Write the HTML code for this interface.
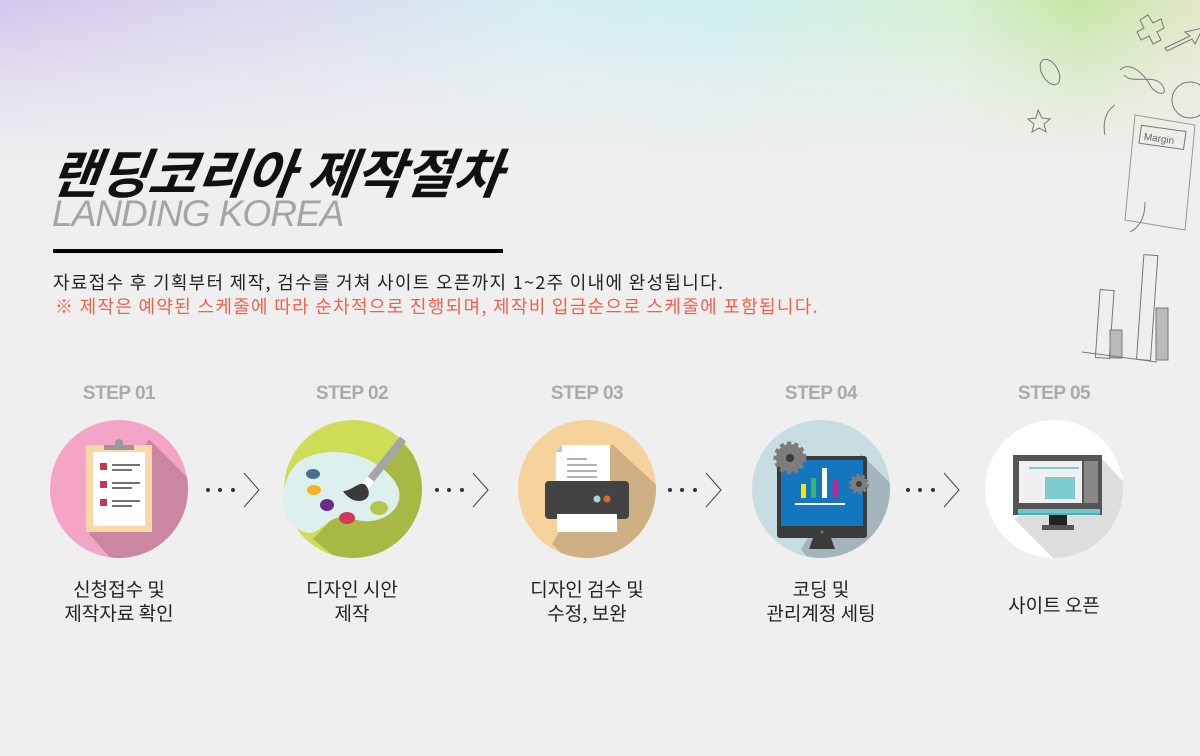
<!DOCTYPE html>
<html><head><meta charset="utf-8"><style>
*{margin:0;padding:0;box-sizing:border-box}
body{width:1200px;height:756px;overflow:hidden;background:#efefef;font-family:"Liberation Sans","Noto Sans CJK KR",sans-serif;position:relative}
.top{position:absolute;left:0;top:0;width:1200px;height:160px;background:linear-gradient(90deg,#d4c6ee 0%,#dcd8f0 20%,#d6eef2 45%,#cdeff0 60%,#d6f0d2 80%,#c6e6a4 90%,#e2e8c8 100%)}
.top:after{content:"";position:absolute;inset:0;background:linear-gradient(180deg,rgba(239,239,239,0) 0%,rgba(239,239,239,.6) 50%,#efefef 100%)}
h1{position:absolute;left:52px;top:136px;font-size:53px;font-weight:bold;font-style:italic;color:#111;font-family:"Noto Sans CJK KR",sans-serif;line-height:70px;transform:skewX(-8deg)}
.en{position:absolute;left:52px;top:194px;font-size:37px;font-style:italic;color:#a5a5a5;letter-spacing:-1px;line-height:40px}
.bar{position:absolute;left:53px;top:249px;width:450px;height:4px;background:#000}
.d1{position:absolute;left:53px;top:269px;font-size:18px;letter-spacing:1.3px;color:#222;font-family:"Noto Sans CJK KR",sans-serif}
.d2{position:absolute;left:55px;top:293px;font-size:18px;letter-spacing:1.3px;color:#f0614a;font-family:"Noto Sans CJK KR",sans-serif}
.step{position:absolute;top:383px;width:200px;margin-left:-100px;text-align:center;font-size:19px;font-weight:bold;color:#aaa;letter-spacing:-.5px}
.cap{position:absolute;width:200px;margin-left:-100px;text-align:center;font-size:19px;color:#222;line-height:24px;font-family:"Noto Sans CJK KR",sans-serif}
svg.c{position:absolute;top:419px}
.arr{position:absolute;top:470px}
</style></head><body>
<div class="top"></div>
<svg style="position:absolute;left:1020px;top:0" width="180" height="380" fill="none" stroke="#777" stroke-width="1">
<path d="M120 20l8-5 5 8 8-4 3 9-7 4 4 8-8 4-4-8-8 4-4-8 7-4z"/>
<path d="M145 48l25-12-5-4 18-4-8 16-3-5-25 12z"/>
<ellipse cx="30" cy="72" rx="8" ry="14" transform="rotate(-30 30 72)"/>
<path d="M18 110l4 8 8 1-6 5 2 8-7-4-7 4 2-8-6-5 8-1z"/>
<path d="M100 70c10-10 25 5 30 15s20 12 12 0-30 0-38-10"/>
<circle cx="170" cy="100" r="18"/>
<path d="M95 105c-15 10-10 30-10 30"/>
<path d="M115 115l60 10-10 105-60-10z" stroke="#999"/>
<rect x="120" y="128" width="45" height="18" transform="rotate(8 140 137)"/>
<text x="124" y="142" font-size="10" fill="#666" stroke="none" transform="rotate(8 140 137)">Margin</text>
<path d="M110 232c10-5 15-15 15-30" />
<rect x="78" y="290" width="14" height="68" transform="rotate(4 85 320)"/>
<rect x="120" y="255" width="14" height="105" transform="rotate(4 127 310)"/>
<rect x="90" y="330" width="12" height="28" fill="#bbb"/>
<rect x="136" y="308" width="12" height="52" fill="#bbb"/>
<path d="M62 352l75 10"/>
</svg>
<h1>랜딩코리아 제작절차</h1>
<div class="en">LANDING KOREA</div>
<div class="bar"></div>
<div class="d1">자료접수 후 기획부터 제작, 검수를 거쳐 사이트 오픈까지 1~2주 이내에 완성됩니다.</div>
<div class="d2">※ 제작은 예약된 스케줄에 따라 순차적으로 진행되며, 제작비 입금순으로 스케줄에 포함됩니다.</div>

<div class="step" style="left:119px">STEP 01</div>
<div class="step" style="left:352px">STEP 02</div>
<div class="step" style="left:587px">STEP 03</div>
<div class="step" style="left:821px">STEP 04</div>
<div class="step" style="left:1054px">STEP 05</div>

<svg class="c" style="left:49px" width="140" height="140"><defs><clipPath id="k1"><circle cx="70" cy="70" r="69"/></clipPath></defs>
<circle cx="70" cy="70" r="69" fill="#f4a5c6"/>
<path d="M100 20L160 80L160 160L80 160L40 115Z" fill="#cb86a2" clip-path="url(#k1)"/>
<rect x="37" y="26" width="66" height="87" fill="#fcd8a8"/><rect x="44" y="33" width="52" height="74" fill="#fff"/>
<rect x="55" y="26" width="30" height="5" fill="#999"/><circle cx="70" cy="24" r="4" fill="#999"/>
<g fill="#c8364f"><rect x="51" y="44" width="7" height="7"/><rect x="51" y="62" width="7" height="7"/><rect x="51" y="80" width="7" height="7"/></g>
<g stroke="#444" stroke-width="1.5"><path d="M63 46h28M63 51h20M63 64h28M63 69h20M63 82h28M63 87h20"/></g></svg>

<svg class="c" style="left:283px" width="140" height="140"><defs><clipPath id="k2"><circle cx="70" cy="70" r="69"/></clipPath></defs>
<circle cx="70" cy="70" r="69" fill="#cedd57"/>
<path d="M120 25L170 75L170 170L90 170L30 120Z" fill="#a8b845" clip-path="url(#k2)"/>
<path d="M20 40c30-15 70-5 90 20s-10 50-40 40-30 25-55 10S0 50 20 40z" fill="#def0ee"/>
<ellipse cx="30" cy="55" rx="7" ry="5" fill="#45708f"/><ellipse cx="31" cy="71" rx="7" ry="5" fill="#f5b21d"/>
<ellipse cx="44" cy="86" rx="7" ry="6" fill="#6a2a90"/><ellipse cx="64" cy="99" rx="8" ry="6" fill="#cf3a5a"/>
<ellipse cx="96" cy="89" rx="9" ry="7" fill="#b6c64c"/>
<path d="M80 70l40-50" stroke="#a5a5a5" stroke-width="8"/><path d="M80 70l8-10" stroke="#fff" stroke-width="8"/>
<path d="M60 72c10 0 20-15 25-2s-15 18-25 2z" fill="#3a3a3a"/></svg>

<svg class="c" style="left:517px" width="140" height="140"><defs><clipPath id="k3"><circle cx="70" cy="70" r="69"/></clipPath></defs>
<circle cx="70" cy="70" r="69" fill="#f6d29d"/>
<path d="M95 25L160 85L160 170L80 170L35 125Z" fill="#cfb084" clip-path="url(#k3)"/>
<path d="M45 26h48v42H39V33z" fill="#fff"/><path d="M39 33l6-7v7z" fill="#9ad6dc"/>
<g stroke="#999" stroke-width="1.5"><path d="M50 40h20M50 46h30M50 52h30M50 58h30"/></g>
<rect x="28" y="62" width="84" height="38" rx="4" fill="#434343"/>
<circle cx="80" cy="80" r="3.5" fill="#9ad6dc"/><circle cx="90" cy="80" r="3.5" fill="#e06a2b"/>
<rect x="40" y="95" width="60" height="18" fill="#fff"/></svg>

<svg class="c" style="left:751px" width="140" height="140"><defs><clipPath id="k4"><circle cx="70" cy="70" r="69"/></clipPath></defs>
<circle cx="70" cy="70" r="69" fill="#c7dde2"/>
<path d="M110 35L170 95L170 170L80 170L50 130Z" fill="#a3b5bb" clip-path="url(#k4)"/>
<rect x="26" y="37" width="90" height="82" rx="3" fill="#3b3b3b"/><rect x="30" y="41" width="82" height="66" fill="#1476bf"/>
<circle cx="71" cy="113" r="1.5" fill="#777"/><path d="M62 119h18l4 11H58z" fill="#3b3b3b"/>
<rect x="50" y="65" width="5" height="14" fill="#f5e800"/><rect x="60" y="59" width="5" height="20" fill="#35b56a"/>
<rect x="71" y="49" width="5" height="30" fill="#fff"/><rect x="82" y="61" width="5" height="18" fill="#e7158c"/>
<rect x="44" y="84" width="50" height="2" fill="#fff"/>
<circle cx="39" cy="39" r="14" fill="#7c7c7c" stroke="#7c7c7c" stroke-width="5" stroke-dasharray="4 3"/><circle cx="39" cy="39" r="4" fill="#3b3b3b"/>
<circle cx="108" cy="65" r="8" fill="#7c7c7c" stroke="#7c7c7c" stroke-width="4" stroke-dasharray="3 2"/><circle cx="108" cy="65" r="3" fill="#3b3b3b"/></svg>

<svg class="c" style="left:984px" width="140" height="140"><defs><clipPath id="k5"><circle cx="70" cy="70" r="69"/></clipPath></defs>
<circle cx="70" cy="70" r="69" fill="#fff"/>
<path d="M118 40L170 95L170 170L100 170L30 100Z" fill="#ddd" clip-path="url(#k5)"/>
<rect x="29" y="36" width="89" height="60" fill="#555"/><rect x="35" y="42" width="63" height="42" fill="#f0f0f0"/>
<rect x="34" y="90" width="82" height="5" fill="#70c8cb"/><rect x="34" y="94" width="82" height="2" fill="#5ab"/>
<rect x="61" y="58" width="30" height="22" fill="#7ccbcf"/><rect x="45" y="48" width="50" height="2" fill="#7ccbcf"/>
<rect x="100" y="42" width="14" height="42" fill="#888"/>
<rect x="65" y="96" width="18" height="10" fill="#222"/><rect x="58" y="106" width="32" height="5" fill="#555"/></svg>

<svg class="arr" style="left:203px" width="60" height="40"><g fill="#333"><circle cx="5" cy="20" r="2"/><circle cx="17" cy="20" r="2"/><circle cx="30" cy="20" r="2"/></g><path d="M41 3l15 17-15 17" fill="none" stroke="#444" stroke-width="1"/></svg>
<svg class="arr" style="left:432px" width="60" height="40"><g fill="#333"><circle cx="5" cy="20" r="2"/><circle cx="17" cy="20" r="2"/><circle cx="30" cy="20" r="2"/></g><path d="M41 3l15 17-15 17" fill="none" stroke="#444" stroke-width="1"/></svg>
<svg class="arr" style="left:665px" width="60" height="40"><g fill="#333"><circle cx="5" cy="20" r="2"/><circle cx="17" cy="20" r="2"/><circle cx="30" cy="20" r="2"/></g><path d="M41 3l15 17-15 17" fill="none" stroke="#444" stroke-width="1"/></svg>
<svg class="arr" style="left:903px" width="60" height="40"><g fill="#333"><circle cx="5" cy="20" r="2"/><circle cx="17" cy="20" r="2"/><circle cx="30" cy="20" r="2"/></g><path d="M41 3l15 17-15 17" fill="none" stroke="#444" stroke-width="1"/></svg>

<div class="cap" style="left:119px;top:577px">신청접수 및<br>제작자료 확인</div>
<div class="cap" style="left:352px;top:577px">디자인 시안<br>제작</div>
<div class="cap" style="left:587px;top:577px">디자인 검수 및<br>수정, 보완</div>
<div class="cap" style="left:821px;top:577px">코딩 및<br>관리계정 세팅</div>
<div class="cap" style="left:1054px;top:593px">사이트 오픈</div>
</body></html>
